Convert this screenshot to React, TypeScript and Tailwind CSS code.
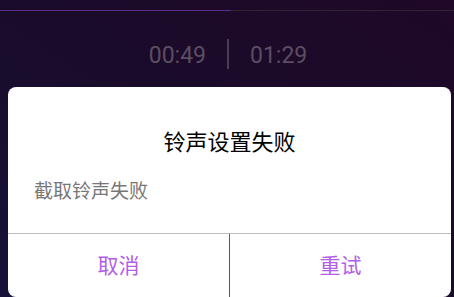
export default function App() {
  return (
    <div className="w-[454px] h-[297px] overflow-hidden bg-gradient-to-tr from-[#16123a] via-[#1a0b2a] to-[#1f0828] flex flex-col">
      {/* progress */}
      <div className="mt-[10px] h-[2px] flex">
        <div className="w-[231px] bg-[#5a2d88]" />
        <div className="flex-1 bg-[#2e2434]" />
      </div>

      {/* times */}
      <div className="mt-[28px] h-[30px] flex items-center justify-center gap-[21px] pl-[2px] pt-[3px] text-[23px] leading-none text-[#5b4d63] font-['Roboto',sans-serif]">
        <span>00:49</span>
        <div className="w-[2px] h-[30px] -mt-[3px] bg-[#4a3c52]" />
        <span>01:29</span>
      </div>

      {/* dialog */}
      <div className="mt-[18px] ml-[8px] w-[443px] h-[210px] shrink-0 bg-white rounded-[8px] flex flex-col font-['Noto_Sans_CJK_SC',sans-serif]">
        <div className="h-[147px] flex flex-col border-b border-[#bdbdbd]">
          <div className="pt-[42px] text-center text-[22px] leading-[22px] text-black">铃声设置失败</div>
          <div className="mt-[29px] pl-[26px] text-[19px] leading-[20px] text-[#777777]">截取铃声失败</div>
        </div>
        <div className="flex-1 flex text-[21px] text-[#b35ee6]">
          <div className="w-[222px] flex items-center justify-center border-r border-[#5a5a5a] pb-[2px]">取消</div>
          <div className="flex-1 flex items-center justify-center pb-[2px]">重试</div>
        </div>
      </div>
    </div>
  )
}
